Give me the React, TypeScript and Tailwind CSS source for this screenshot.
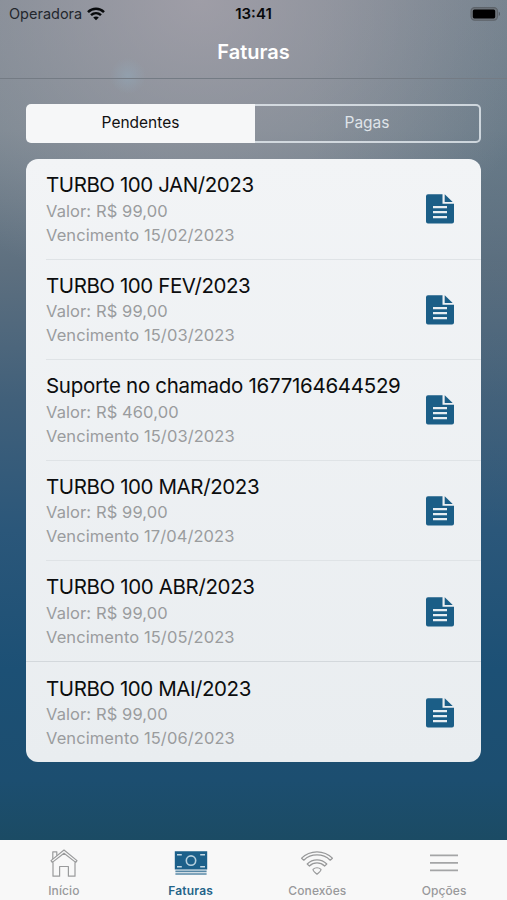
import { clsx } from "clsx"

const invoices = [
  { title: "TURBO 100 JAN/2023", value: "R$ 99,00", due: "15/02/2023", spacing: "tracking-[-0.43px]" },
  { title: "TURBO 100 FEV/2023", value: "R$ 99,00", due: "15/03/2023", spacing: "tracking-[-0.43px]" },
  { title: "Suporte no chamado 1677164644529", value: "R$ 460,00", due: "15/03/2023", spacing: "tracking-[-0.29px]" },
  { title: "TURBO 100 MAR/2023", value: "R$ 99,00", due: "17/04/2023", spacing: "tracking-[-0.4px]" },
  { title: "TURBO 100 ABR/2023", value: "R$ 99,00", due: "15/05/2023", spacing: "tracking-[-0.37px]" },
  { title: "TURBO 100 MAI/2023", value: "R$ 99,00", due: "15/06/2023", spacing: "tracking-[-0.43px]" },
]

const SignalIcon = () => (
  <svg width="18" height="14" viewBox="0 0 18 14" fill="none" stroke="#080a0c" strokeWidth="2.5">
    <path d="M1 5.1C5.5 .7 12.5 .7 17 5.1" />
    <path d="M4 8.2c2.9-2.7 7.1-2.7 10 0" />
    <path d="M6.2 10.5c1.6-1.4 4-1.4 5.6 0L9 13.3z" fill="#080a0c" stroke="none" />
  </svg>
)

const BatteryIcon = () => (
  <svg width="31" height="14" viewBox="0 0 31 14">
    <rect x="1" y=".6" width="26.5" height="12.6" rx="3.6" fill="#6f757c" stroke="#5d636a" strokeWidth="1.1" />
    <rect x="2.8" y="2.4" width="22.4" height="9" rx="1.6" fill="#000" />
    <path d="M28.8 4.8c1.6.6 1.6 3.6 0 4.2z" fill="#51575e" />
  </svg>
)

const DocumentIcon = () => (
  <svg width="28" height="30" viewBox="0 0 28 30" fill="#1b5e87">
    <path d="M2 .3h14.5v9.4H28v17.8a2 2 0 0 1-2 2H2a2 2 0 0 1-2-2V2.3a2 2 0 0 1 2-2z" />
    <path d="M18.7.3l8 7.6h-8z" />
    <path d="M7 13.2h14M7 18.2h14M7 23.2h14" stroke="#e8eef2" strokeWidth="2.3" />
  </svg>
)

const HomeIcon = () => (
  <svg width="28" height="28" viewBox="0 0 28 28" fill="none" stroke="#9a9b9c" strokeWidth="1.2" strokeLinejoin="round">
    <path d="M1 11.6L14 1l13 10.6-1.3 1.8L14 4.2 2.3 13.4z" />
    <path d="M2.8 10V2.8h4v3.9M3 13.2v14h6.6v-9.7h8.8v9.7H25v-14" />
  </svg>
)

const BillsIcon = () => (
  <svg width="34" height="25" viewBox="0 0 34 25">
    <path d="M.8.3h32.4v18.2H.8z" fill="#1c608a" />
    <circle cx="17" cy="9.6" r="4.7" fill="none" stroke="#b6d0de" strokeWidth="1.6" />
    <path d="M3 3.7h4.8M26.2 3.7H31M3 15.8h4.8M26.2 15.8H31" stroke="#c3d8e3" strokeWidth="1.4" />
    <path d="M1.4 20.4h31.2M1.4 23h31.2" stroke="#5788a6" strokeWidth="1.7" />
  </svg>
)

const WifiIcon = () => (
  <svg width="34" height="26" viewBox="0 0 34 26" fill="none" stroke="#98999a" strokeWidth="1.2" strokeLinejoin="round">
    <path d="M1.6 8.2C10-.3 24-.3 32.4 8.2l-2.2 2C23 3.2 11 3.2 3.8 10.2z" />
    <path d="M7.2 14c5.5-5.4 14.1-5.4 19.6 0l-2.2 2c-4.3-4.1-10.9-4.1-15.2 0z" />
    <path d="M13 19.4c2.2-2.2 5.8-2.2 8 0q.2 1.6-4 4.8-4.2-3.2-4-4.8z" />
  </svg>
)

const MenuIcon = () => (
  <svg width="28" height="20" viewBox="0 0 28 20" stroke="#a4a5a6" strokeWidth="1.8">
    <path d="M0 2.4h28M0 9.9h28M0 17.3h28" />
  </svg>
)

const tabs = [
  { label: "Início", icon: HomeIcon, active: false },
  { label: "Faturas", icon: BillsIcon, active: true },
  { label: "Conexões", icon: WifiIcon, active: false },
  { label: "Opções", icon: MenuIcon, active: false },
]

export default function App() {
  return (
    <div className="flex h-[900px] w-[507px] flex-col overflow-hidden bg-[radial-gradient(circle_at_128px_76px,rgba(146,166,182,0.6),transparent_18px),radial-gradient(ellipse_360px_300px_at_200px_0px,rgba(172,166,175,0.72),transparent),radial-gradient(ellipse_200px_380px_at_507px_150px,rgba(80,105,125,0.35),transparent),linear-gradient(180deg,#7c8791_0px,#77858f_130px,#5d6f7f_270px,#41607a_400px,#2b577a_530px,#1c5075_670px,#1c4e70_780px,#1b4b64_840px)] font-[Inter,sans-serif]">
      <header className="h-[79px] shrink-0 border-b border-[#747b84]">
        <div className="grid h-7 grid-cols-3 items-center">
          <div className="flex items-center gap-[5px] pl-[9px]">
            <span className="text-[14.5px] text-[#23272d]">Operadora</span>
            <SignalIcon />
          </div>
          <span className="text-center text-[15px] font-semibold text-[#08090b]">13:41</span>
          <div className="flex justify-end pr-[6px] pb-px">
            <BatteryIcon />
          </div>
        </div>
        <h1 className="pt-[9px] text-center text-xl leading-[30px] font-semibold text-white">Faturas</h1>
      </header>

      <main className="flex-1 px-[26px] pt-[25px]">
        <div className="flex h-[39px] text-[15.5px]">
          <button className="w-[229px] rounded-l-[5px] bg-[#f6f7f8] pb-px text-[#111]">Pendentes</button>
          <button className="flex-1 rounded-r-[5px] border-2 border-l-0 border-[#e5ebf1]/80 pb-px text-[#dfe4e9]">
            Pagas
          </button>
        </div>

        <ul className="mt-4 h-[603px] overflow-hidden rounded-xl bg-linear-to-b from-[#f2f4f6] to-[#e9edf0]">
          {invoices.map((invoice, index) => (
            <li key={invoice.title} className="flex h-[100.6px] flex-col">
              <div className="flex flex-1 items-center justify-between pr-[27px] pl-5">
                <div className="whitespace-nowrap">
                  <p className={clsx("text-[20.5px] leading-[27.5px] text-[#0c0d0e]", invoice.spacing)}>{invoice.title}</p>
                  <p className="text-[16.5px] leading-6 tracking-[0.09px] text-[#9a9c9e]">Valor: {invoice.value}</p>
                  <p className="text-[16.5px] leading-6 tracking-[0.09px] text-[#9a9c9e]">Vencimento {invoice.due}</p>
                </div>
                <div className="pt-px">
                  <DocumentIcon />
                </div>
              </div>
              {index < invoices.length - 1 && (
                <div className={clsx("h-px", index === 4 ? "bg-[#d3d8dc]" : "ml-5 bg-[#dfe3e6]")} />
              )}
            </li>
          ))}
        </ul>
      </main>

      <nav className="grid h-[60px] shrink-0 grid-cols-4 bg-[#f8f8f8]">
        {tabs.map(({ label, icon: Icon, active }) => (
          <button key={label} className="flex flex-col items-center pl-px">
            <span className="flex h-[45px] items-center pt-px">
              <Icon />
            </span>
            <span
              className={clsx(
                "text-[12px] leading-3",
                active ? "font-semibold tracking-[0.2px] text-[#246489]" : "font-medium tracking-[0.1px] text-[#98999b]",
              )}
            >
              {label}
            </span>
          </button>
        ))}
      </nav>
    </div>
  )
}
